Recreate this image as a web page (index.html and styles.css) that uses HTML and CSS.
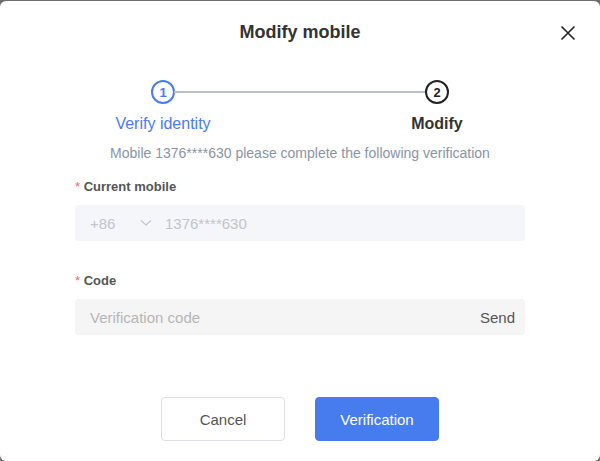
FILE: index.html
```html
<!DOCTYPE html>
<html lang="en">
<head>
  <meta charset="UTF-8" />
  <title>Modify mobile</title>
  <meta name="viewport" content="width=device-width, initial-scale=1.0" />
  <link rel="stylesheet" href="styles.css">
</head>
<body>
  <div class="dialog">
    <!-- Header -->
    <div class="dialog-header">
      <h2>Modify mobile</h2>
      <button class="close-btn" aria-label="Close">
        <svg width="16" height="16" viewBox="0 0 16 16">
          <path d="M1.5 1.5 L14.5 14.5 M14.5 1.5 L1.5 14.5" stroke="#222" stroke-width="1.6" fill="none" />
        </svg>
      </button>
    </div>

    <!-- Steps -->
    <div class="steps">
      <div class="step done">
        <div class="step-dot">1</div>
        <div class="step-title">Verify identity</div>
      </div>
      <div class="step-line"></div>
      <div class="step current">
        <div class="step-dot">2</div>
        <div class="step-title">Modify</div>
      </div>
    </div>

    <p class="tip">Mobile 1376****630 please complete the following verification</p>

    <!-- Form -->
    <form class="form">
      <div class="form-item">
        <label><span class="req">*</span> Current mobile</label>
        <div class="field field-phone">
          <span class="area">+86</span>
          <svg class="chevron" width="12" height="8" viewBox="0 0 12 8">
            <path d="M1 1.5 L6 6 L11 1.5" stroke="#c0c4cc" stroke-width="1.2" fill="none" />
          </svg>
          <span class="phone">1376****630</span>
        </div>
      </div>

      <div class="form-item">
        <label><span class="req">*</span> Code</label>
        <div class="field field-code">
          <input type="text" placeholder="Verification code" />
          <span class="send">Send</span>
        </div>
      </div>
    </form>

    <!-- Footer -->
    <div class="dialog-footer">
      <button type="button" class="btn btn-cancel">Cancel</button>
      <button type="button" class="btn btn-primary">Verification</button>
    </div>
  </div>
</body>
</html>
```

FILE: styles.css
```css
* {
  box-sizing: border-box;
}

body {
  margin: 0;
  padding: 1px 0 0;
  background: #6e6e6e;
  font-family: 'Liberation Sans', Arial, sans-serif;
  color: #333;
}

.dialog {
  width: 600px;
  height: 460px;
  background: #fff;
  border-radius: 6px;
  display: flex;
  flex-direction: column;
}

.dialog-header {
  height: 62px;
  display: flex;
  align-items: center;
  justify-content: center;
  position: relative;
}

.dialog-header h2 {
  margin: 0;
  font-size: 18px;
  font-weight: bold;
  color: #333;
}

.close-btn {
  position: absolute;
  right: 24px;
  top: 24px;
  border: none;
  background: none;
  padding: 0;
  width: 16px;
  height: 16px;
  cursor: pointer;
}

.close-btn svg {
  display: block;
}

.steps {
  display: flex;
  align-items: flex-start;
  justify-content: center;
  margin-top: 17px;
}

.step {
  width: 120px;
  display: flex;
  flex-direction: column;
  align-items: center;
}

.step-dot {
  width: 24px;
  height: 24px;
  border-radius: 50%;
  border: 2px solid #333;
  font-size: 13px;
  font-weight: bold;
  display: flex;
  align-items: center;
  justify-content: center;
  background: #fff;
}

.step.done .step-dot {
  border-color: #4a7cf0;
  color: #4a7cf0;
}

.step.current .step-dot {
  border-color: #222;
  color: #222;
}

.step-title {
  margin-top: 10px;
  font-size: 16px;
  line-height: 20px;
}

.step.done .step-title {
  color: #4a7cf0;
}

.step.current .step-title {
  font-weight: bold;
  color: #333;
}

.step-line {
  width: 252px;
  height: 2px;
  background: #b9bdc9;
  margin: 11px -49px 0;
}

.tip {
  margin: 11px 0 0;
  text-align: center;
  font-size: 14px;
  color: #8a94a6;
}

.form {
  padding: 0 75px;
  margin-top: 18px;
}

.form-item {
  margin-bottom: 32px;
}

.form-item label {
  display: block;
  font-size: 13px;
  font-weight: bold;
  color: #555;
  margin-bottom: 11px;
}

.req {
  color: #f56c6c;
  font-weight: normal;
}

.field {
  height: 36px;
  border-radius: 4px;
  display: flex;
  align-items: center;
  padding: 0 10px 0 15px;
  font-size: 15px;
}

.field-phone {
  background: #f5f6fa;
  color: #c0c4cc;
}

.area {
  width: 50px;
}

.chevron {
  margin-right: 13px;
}

.field-code {
  background: #f5f5f5;
}

.field-code input {
  flex: 1;
  border: none;
  background: transparent;
  font-family: inherit;
  font-size: 15px;
  color: #333;
  padding: 0;
  outline: none;
}

.field-code input::placeholder {
  color: #b5b5b5;
}

.send {
  color: #555;
  font-size: 15px;
}

.dialog-footer {
  margin-top: auto;
  margin-bottom: 20px;
  display: flex;
  justify-content: center;
  gap: 30px;
}

.btn {
  width: 124px;
  height: 44px;
  border-radius: 4px;
  font-family: inherit;
  font-size: 15px;
  cursor: pointer;
}

.btn-cancel {
  background: #fff;
  border: 1px solid #dcdfe6;
  color: #555;
}

.btn-primary {
  background: #477cef;
  border: 1px solid #477cef;
  color: #fff;
}
```
